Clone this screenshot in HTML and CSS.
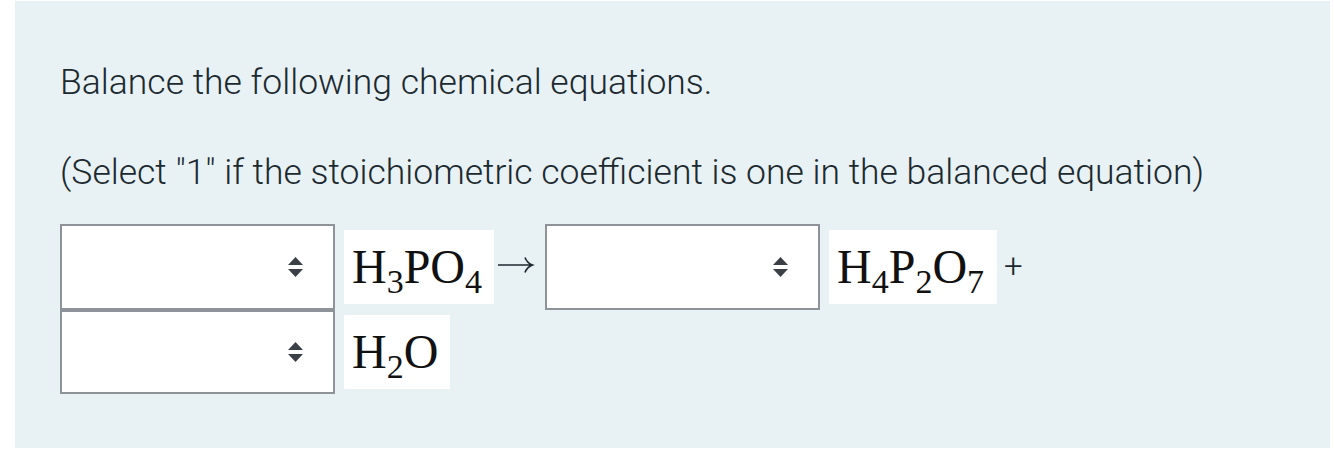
FILE: index.html
```html
<!DOCTYPE html>
<html>
<head>
<meta charset="utf-8">
<link rel="stylesheet" href="styles.css">
</head>
<body>
<div class="panel">
  <p class="line first">Balance the following chemical equations.</p>
  <p class="line second">(Select "1" if the stoichiometric coefficient is one in the balanced equation)</p>
  <div class="eq">
    <div class="row">
      <div class="sel"><svg class="chev" width="15" height="20" viewBox="0 0 15 20"><path d="M7.5 0 L15 8 L0 8 Z M0 12 L15 12 L7.5 20 Z" fill="#3a4046"/></svg></div>
      <div class="chem w1">H<sub>3</sub>PO<sub>4</sub></div>
      <span class="arrow"><svg width="40" height="20" viewBox="0 0 40 20"><path d="M3 10 H37 M30 2.5 Q32 8 37.5 10 Q32 12 30 17.5" fill="none" stroke="#1c2a30" stroke-width="1.6"/></svg></span>
      <div class="sel"><svg class="chev" width="15" height="20" viewBox="0 0 15 20"><path d="M7.5 0 L15 8 L0 8 Z M0 12 L15 12 L7.5 20 Z" fill="#3a4046"/></svg></div>
      <div class="chem w3">H<sub>4</sub>P<sub>2</sub>O<sub>7</sub></div>
      <span class="plus">+</span>
    </div>
    <div class="row">
      <div class="sel"><svg class="chev" width="15" height="20" viewBox="0 0 15 20"><path d="M7.5 0 L15 8 L0 8 Z M0 12 L15 12 L7.5 20 Z" fill="#3a4046"/></svg></div>
      <div class="chem w2">H<sub>2</sub>O</div>
    </div>
  </div>
</div>
</body>
</html>
```
FILE: styles.css
```css
html, body {
  margin: 0;
  padding: 0;
  background: #ffffff;
}
body {
  padding: 1px 4px 0 15px;
}
.panel {
  background: #e8f1f4;
  height: 447px;
  box-sizing: border-box;
  padding: 61px 0 0 45px;
  font-family: Roboto, "Liberation Sans", sans-serif;
  font-weight: 300;
  color: #1c2a30;
}
.line {
  margin: 0;
  font-size: 35.5px;
  line-height: 40px;
}
.second {
  margin-top: 50px;
}
.eq {
  margin-top: 32px;
  display: flex;
  flex-direction: column;
}
.row {
  display: flex;
  align-items: center;
}
.sel {
  width: 275px;
  height: 86px;
  box-sizing: border-box;
  border: 2px solid #8e939a;
  background: #ffffff;
  display: flex;
  align-items: center;
  justify-content: flex-end;
  padding-right: 30px;
}
.row + .row .sel {
  height: 84px;
}
.chev {
  display: block;
}
.chem {
  margin-left: 9px;
  height: 74px;
  background: #ffffff;
  font-family: "Liberation Serif", "Times New Roman", serif;
  font-weight: 400;
  color: #111;
  font-size: 48px;
  line-height: 74px;
  box-sizing: border-box;
  padding-left: 8px;
  white-space: nowrap;
}
.chem sub {
  font-size: 34px;
  vertical-align: -10px;
  line-height: 0;
}
.w1 { width: 150px; }
.w2 { width: 106px; }
.w3 { width: 168px; }
.arrow {
  width: 51px;
  box-sizing: border-box;
  padding-left: 1px;
  display: flex;
  align-items: center;
  margin-top: -4px;
}
.arrow svg {
  display: block;
}
.plus {
  margin-left: 7px;
  font-size: 33px;
  font-weight: 300;
  color: #1c2a30;
  line-height: 40px;
  margin-top: -2px;
}
```
